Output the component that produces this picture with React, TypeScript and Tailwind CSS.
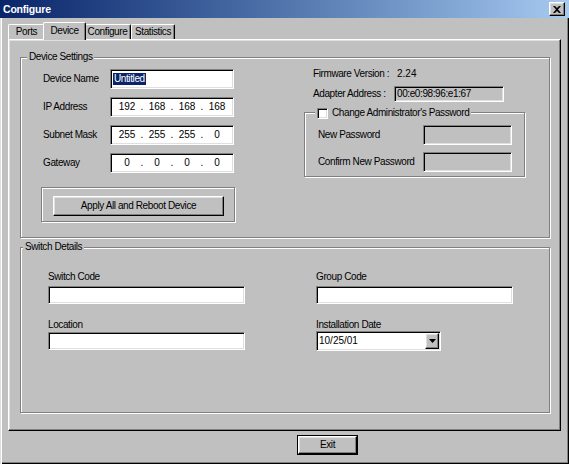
import React from 'react';

// Win9x style pieces
const sunken =
  'border border-t-[#808080] border-l-[#808080] border-r-white border-b-white shadow-[inset_1px_1px_0_#000,inset_-1px_-1px_0_#dfdfdf]';
const raised =
  'border border-t-white border-l-white border-r-black border-b-black bg-[#c0c0c0] shadow-[inset_-1px_-1px_0_#808080,inset_1px_1px_0_#dfdfdf]';
const etched = 'border border-[#808080] shadow-[1px_1px_0_#fff,inset_1px_1px_0_#fff]';

const IpField: React.FC<{ parts: string[] }> = ({ parts }) => (
  <div className={`${sunken} bg-white h-[20px] w-[124px] flex items-center pl-[3px] tracking-normal`}>
    {parts.map((p, i) => (
      <React.Fragment key={i}>
        <span className="w-[26px] text-center">{p}</span>
        {i < 3 && <span className="w-[4px] text-center">.</span>}
      </React.Fragment>
    ))}
  </div>
);

const LabelRow: React.FC<{ label: string; children: React.ReactNode }> = ({ label, children }) => (
  <div className="flex items-center h-[20px]">
    <span className="w-[67px] ml-[2px]">{label}</span>
    {children}
  </div>
);

const Tab: React.FC<{ label: string; width: string; active?: boolean }> = ({ label, width, active }) => (
  <div
    className={`${width} flex items-center justify-center border-t border-l border-r border-t-white border-l-white border-r-black rounded-t-[2px] shadow-[inset_-1px_0_0_#808080] bg-[#c0c0c0] ${
      active ? 'h-[18px] -mx-[2px] -mb-px relative z-10 pb-[2px]' : 'h-[15px]'
    }`}
  >
    {label}
  </div>
);

const App: React.FC = () => {
  return (
    <div className="w-[569px] h-[464px] bg-[#c0c0c0] text-black text-[10px] leading-[12px] tracking-[-0.4px] font-['Liberation_Sans',Arial,sans-serif] shadow-[inset_1px_0_0_#dfdfdf,inset_2px_0_0_#fff,inset_-1px_-1px_0_#000,inset_-2px_-2px_0_#808080] overflow-hidden">
      {/* Title bar */}
      <div className="h-[18px] flex items-center justify-between pl-[3px] pr-[4px] bg-gradient-to-r from-[#0a246a] to-[#a6caf0]">
        <span className="text-white font-bold text-[10.5px] tracking-[-0.2px]">Configure</span>
        <div className={`${raised} w-[16px] h-[14px] flex items-center justify-center`}>
          <svg width="8" height="7" viewBox="0 0 8 7">
            <path d="M0 0h2l2 2 2-2h2L5 3.5 8 7H6L4 5 2 7H0l3-3.5z" fill="#000" />
          </svg>
        </div>
      </div>

      {/* Tabs */}
      <div className="flex items-end h-[21px] pt-[4px] ml-[8px]">
        <Tab label="Ports" width="w-[37px]" />
        <Tab label="Device" width="w-[43px]" active />
        <Tab label="Configure" width="w-[47px]" />
        <Tab label="Statistics" width="w-[44px]" />
      </div>

      {/* Tab panel */}
      <div className={`${raised} ml-[8px] w-[553px] h-[392px] pl-[11px] pt-[17px]`}>
        {/* Device Settings */}
        <div className={`${etched} relative w-[530px] h-[181px] flex`}>
          <span className="absolute -top-[7px] left-[6px] px-[2px] bg-[#c0c0c0]">Device Settings</span>

          <div className="w-[283px] pl-[20px] pt-[11px] flex flex-col">
            <div className="flex flex-col gap-[8px]">
              <LabelRow label="Device Name">
                <div className={`${sunken} bg-white h-[20px] w-[124px] flex items-center pl-[2px]`}>
                  <span className="bg-[#0a246a] text-white px-px leading-[12px]">Untitled</span>
                </div>
              </LabelRow>
              <LabelRow label="IP Address">
                <IpField parts={['192', '168', '168', '168']} />
              </LabelRow>
              <LabelRow label="Subnet Mask">
                <IpField parts={['255', '255', '255', '0']} />
              </LabelRow>
              <LabelRow label="Gateway">
                <IpField parts={['0', '0', '0', '0']} />
              </LabelRow>
            </div>

            <div className={`${etched} mt-[14px] w-[194px] h-[35px] pl-[11px] pt-[8px]`}>
              <div className={`${raised} w-[171px] h-[20px] flex items-center justify-center`}>
                Apply All and Reboot Device
              </div>
            </div>
          </div>

          <div className="pt-[8px] flex flex-col">
            <div className="flex items-center h-[16px] pl-[9px]">
              <span className="w-[81px]">Firmware Version :</span>
              <span className="pl-[3px] tracking-normal">2.24</span>
            </div>
            <div className="flex items-center h-[16px] mt-[4px] pl-[9px]">
              <span className="w-[81px]">Adapter Address :</span>
              <div className={`${sunken} bg-[#c0c0c0] h-[16px] w-[110px] flex items-center pl-[2px]`}>
                00:e0:98:96:e1:67
              </div>
            </div>

            <div className={`${etched} relative mt-[10px] w-[221px] h-[65px] pl-[13px] pt-[12px] flex flex-col gap-[7px]`}>
              <div className="absolute -top-[6px] left-[10px] px-[2px] bg-[#c0c0c0] flex items-center gap-[4px]">
                <div className={`${sunken} bg-white w-[11px] h-[11px]`} />
                <span>Change Administrator's Password</span>
              </div>
              <div className="flex items-center h-[20px]">
                <span className="w-[105px]">New Password</span>
                <div className={`${sunken} bg-[#c0c0c0] h-[20px] w-[89px]`} />
              </div>
              <div className="flex items-center h-[20px]">
                <span className="w-[105px]">Confirm New Password</span>
                <div className={`${sunken} bg-[#c0c0c0] h-[20px] w-[89px]`} />
              </div>
            </div>
          </div>
        </div>

        {/* Switch Details */}
        <div className={`${etched} relative mt-[9px] w-[530px] h-[166px] flex gap-[71px] pl-[27px] pt-[23px]`}>
          <span className="absolute -top-[7px] left-[2px] px-[2px] bg-[#c0c0c0]">Switch Details</span>

          <div className="w-[197px] flex flex-col">
            <span className="h-[12px] mb-[3px]">Switch Code</span>
            <div className={`${sunken} bg-white h-[18px]`} />
            <span className="h-[12px] mt-[15px] mb-[1px]">Location</span>
            <div className={`${sunken} bg-white h-[18px]`} />
          </div>

          <div className="w-[197px] flex flex-col">
            <span className="h-[12px] mb-[3px]">Group Code</span>
            <div className={`${sunken} bg-white h-[18px]`} />
            <span className="h-[12px] mt-[15px]">Installation Date</span>
            <div className={`${sunken} bg-white h-[20px] w-[125px] flex items-center pl-[2px] pr-[1px] justify-between`}>
              <span className="tracking-normal">10/25/01</span>
              <div className={`${raised} w-[14px] h-[16px] flex items-center justify-center`}>
                <svg width="7" height="4" viewBox="0 0 7 4">
                  <path d="M0 0h7L3.5 4z" fill="#000" />
                </svg>
              </div>
            </div>
          </div>
        </div>
      </div>

      {/* Exit */}
      <div className="mt-[4px] ml-[297px] w-[61px] h-[20px] border border-black">
        <div className={`${raised} w-full h-full flex items-center justify-center`}>Exit</div>
      </div>
    </div>
  );
};

export default App;
